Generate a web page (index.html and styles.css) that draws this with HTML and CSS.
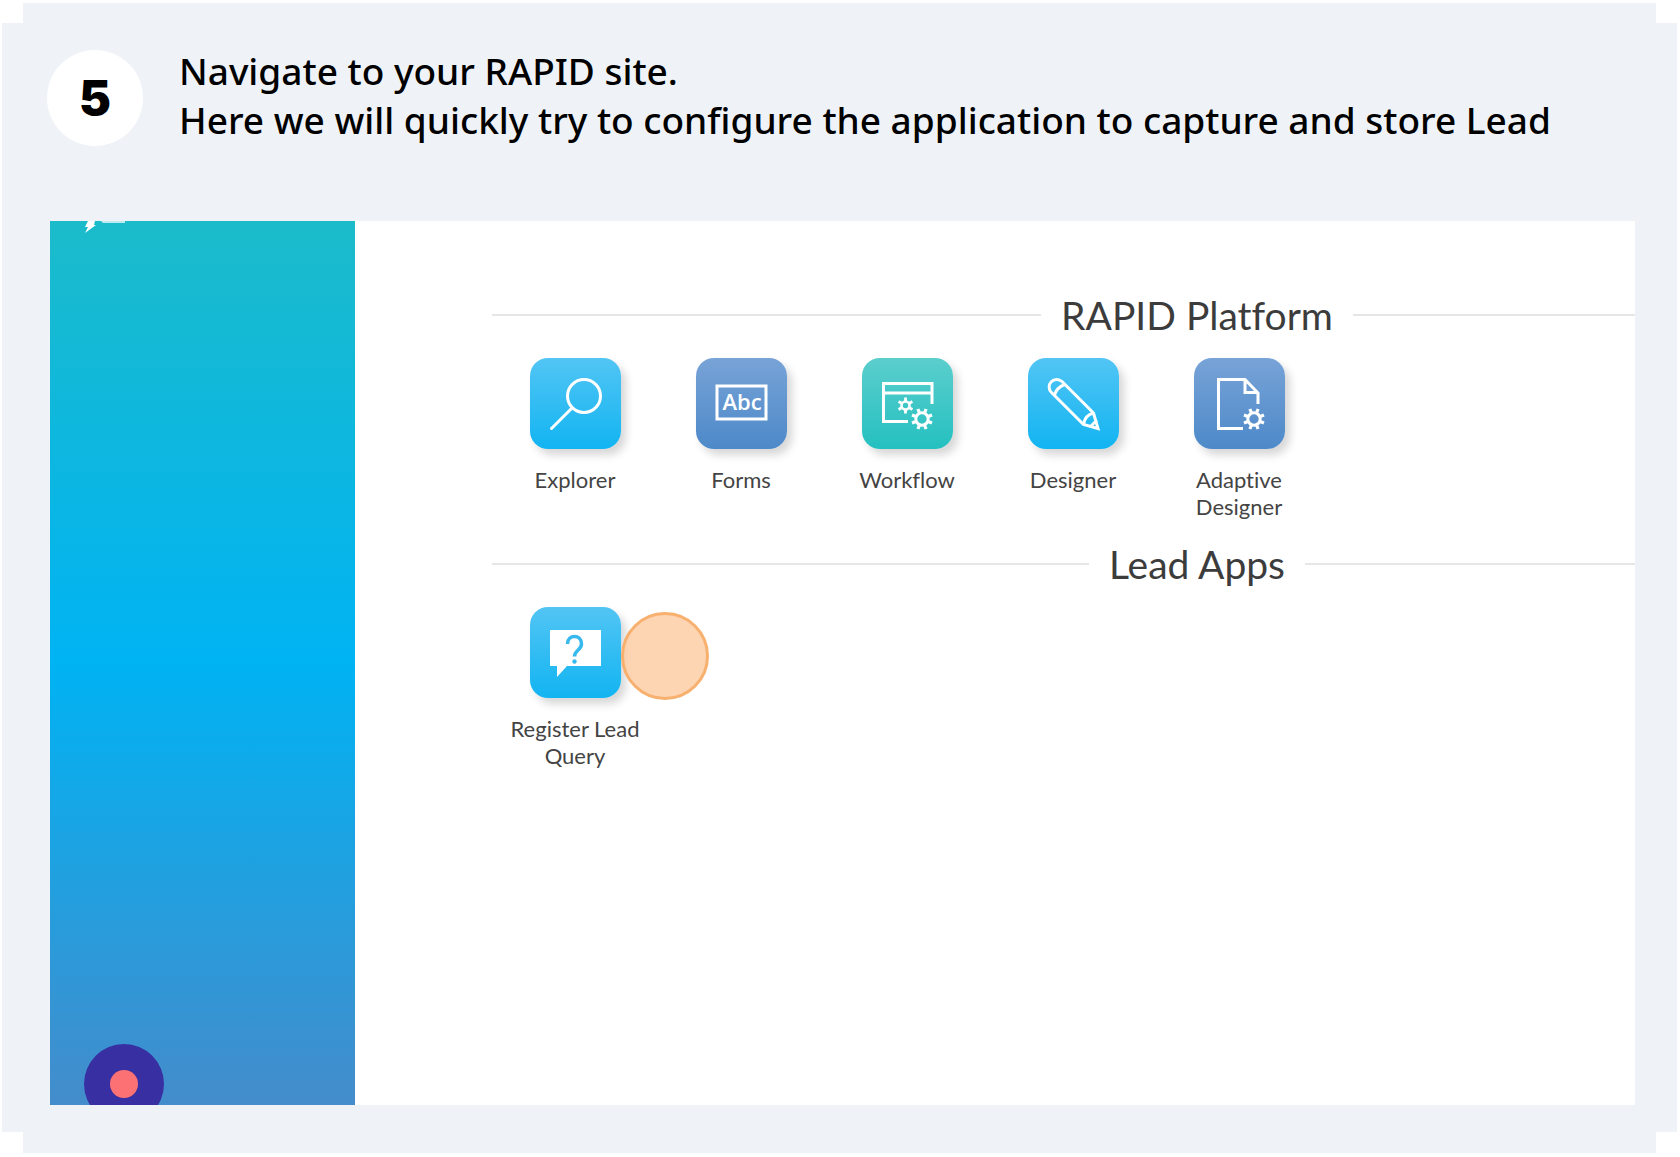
FILE: index.html
```html
<!DOCTYPE html>
<html lang="en">
<head>
<meta charset="utf-8">
<title>Step 5 – RAPID site</title>
<meta name="viewport" content="width=device-width, initial-scale=1">
<link rel="stylesheet" href="styles.css">
</head>
<body>
<svg width="0" height="0" class="defs" aria-hidden="true">
  <symbol id="gear" viewBox="-12 -12 24 24"><g fill="none" stroke="#fff"><circle r="6.200" stroke-width="3"/><path stroke-width="3.200" d="M6 2.500 10 4.100M2.500 6 4.100 10M-2.500 6-4.100 10M-6 2.500-10 4.100M-6-2.500-10-4.100M-2.500-6-4.100-10M2.500-6 4.100-10M6-2.500 10-4.100"/></g></symbol>
</svg>
<main class="step">
  <header class="step-header">
    <span class="step-number">5</span>
    <h1 class="step-text">Navigate to your RAPID site.<br>Here we will quickly try to configure the application to capture and store Lead</h1>
  </header>
  <div class="screen">
    <aside class="sidebar">
      <svg class="logo" width="44" height="12" viewBox="0 0 44 12" aria-hidden="true"><path d="M4 0h7l-1 4h2L1 12l3-6H1z" fill="#fff"/><path d="M17 0h24v2H19z" fill="#fff" opacity=".7"/></svg>
      <button class="record" type="button" aria-label="Record"><span class="record-dot"></span></button>
    </aside>
    <div class="workspace">
      <section class="group">
        <h2 class="group-title">RAPID Platform</h2>
        <div class="apps">
          <a class="app" href="#"><span class="tile sky"><svg viewBox="0 0 91 91" fill="none" stroke="#fff" stroke-width="3" stroke-linecap="round"><circle cx="54" cy="38" r="16.500"/><path d="M42 50 21.500 70.500"/></svg></span>Explorer</a>
          <a class="app" href="#"><span class="tile blue"><svg viewBox="0 0 91 91" fill="none" stroke="#fff" stroke-width="3"><path d="M21 28h49v33H21z"/><text class="abc" x="46" y="52" text-anchor="middle">Abc</text></svg></span>Forms</a>
          <a class="app" href="#"><span class="tile teal"><svg viewBox="0 0 91 91" fill="none" stroke="#fff" stroke-width="3"><path d="M46 63.500H21.500V25.500H70V46M21.500 35H70"/><g transform="translate(43.500 47.500)"><circle r="4" stroke-width="2.500"/><path stroke-width="2.800" d="M0-4v-4M0 4v4M3.500 2 6.900 4M3.500-2 6.900-4M-3.500 2-6.900 4M-3.500-2-6.900-4"/></g><use href="#gear" x="48" y="49" width="24" height="24"/></svg></span>Workflow</a>
          <a class="app" href="#"><span class="tile sky"><svg viewBox="0 0 91 91" fill="none" stroke="#fff" stroke-width="3"><path d="M55.500 66.500 23.500 34.500A7.500 7.500 0 0 1 34 23.500L65.500 55 70 70.500zM26.500 37.500Q28 30 36.500 26.500M55.500 66.500Q57 57 65.500 55M62 69 69 62"/></svg></span>Designer</a>
          <a class="app" href="#"><span class="tile blue"><svg viewBox="0 0 91 91" fill="none" stroke="#fff" stroke-width="3"><path d="M49 70.500H24.500V21.500H51L64 35v11M51 22v12.500h12"/><use href="#gear" x="48" y="49" width="24" height="24"/></svg></span>Adaptive Designer</a>
        </div>
      </section>
      <section class="group">
        <h2 class="group-title">Lead Apps</h2>
        <div class="apps">
          <a class="app" href="#"><span class="tile sky"><svg viewBox="0 0 91 91"><path d="M20 23h51v36H37L27 70V59h-7z" fill="#fff"/><path d="M37.500 37c0-10 14-10 14 0 0 6-7 6-7 12.500" fill="none" stroke="#37b9ee" stroke-width="3.500"/><circle cx="44.500" cy="54.500" r="2.200" fill="#37b9ee"/></svg></span>Register Lead Query<span class="click-marker"></span></a>
        </div>
      </section>
    </div>
  </div>
</main>
</body>
</html>
```
FILE: styles.css
```css
* { box-sizing: border-box; }

body {
  margin: 0;
  background: #fff;
  font-family: Lato, "Liberation Sans", sans-serif;
  font-variant-ligatures: none;
}

.defs { display: none; }

/* The card's corners are notched squares. */
.step {
  margin: 3px 3px 4px 2px;
  padding: 43px 42px 48px 48px;
  background: #eff3f8;
  clip-path: polygon(21px 0, calc(100% - 21px) 0, calc(100% - 21px) 20px, 100% 20px, 100% calc(100% - 21px), calc(100% - 21px) calc(100% - 21px), calc(100% - 21px) 100%, 21px 100%, 21px calc(100% - 21px), 0 calc(100% - 21px), 0 20px, 21px 20px);
}

.step-header {
  display: flex;
  align-items: flex-start;
  gap: 36px;
  min-height: 175px;
  margin-left: -3px;
}

.step-number {
  display: flex;
  flex: none;
  align-items: center;
  justify-content: center;
  width: 96px;
  height: 96px;
  margin-top: 4px;
  border-radius: 50%;
  background: #fff;
  color: #000;
  font: 900 48px/96px Inter, sans-serif;
}

.step-text {
  margin: 0;
  color: #000;
  font: 500 37px/49px "Noto Sans", sans-serif;
}

.screen {
  display: flex;
  min-height: 884px;
  overflow: hidden;
  background: #fff;
}

.sidebar {
  display: flex;
  flex: none;
  flex-direction: column;
  justify-content: space-between;
  align-items: flex-start;
  width: 305px;
  padding: 0 34px;
  background: linear-gradient(#1bbbca, #00b3f3 50%, #448ccb);
}

.logo { display: block; }

.record {
  display: flex;
  align-items: center;
  justify-content: center;
  width: 80px;
  height: 80px;
  margin-bottom: -19px;
  padding: 0;
  border: 0;
  border-radius: 50%;
  background: #372fa2;
}

.record-dot {
  width: 28px;
  height: 28px;
  border-radius: 50%;
  background: #fc7274;
}

/* Wider than the screen: the right part is cut off. */
.workspace {
  flex: none;
  width: 1547px;
  padding: 69px 0 0 137px;
}

.group { min-height: 249px; }

.group-title {
  display: flex;
  align-items: center;
  gap: 20px;
  margin: 0;
  color: #3c3c3c;
  font-size: 39px;
  font-weight: 400;
  line-height: 50px;
}

.group-title::before,
.group-title::after {
  content: "";
  flex: 1;
  height: 2px;
  background: #e6e6e6;
}

.apps {
  display: flex;
  padding-top: 18px;
}

.app {
  position: relative;
  display: flex;
  flex-direction: column;
  align-items: center;
  gap: 17px;
  width: 166px;
  padding: 0 16px;
  color: #444;
  font-size: 22px;
  line-height: 27px;
  text-align: center;
  text-decoration: none;
}

.tile {
  width: 91px;
  height: 91px;
  border-radius: 18px;
  box-shadow: 5px 6px 8px rgba(0, 0, 0, .16);
}

.tile svg { display: block; }
.sky { background: linear-gradient(#52c5f4, #12b4f2); }
.blue { background: linear-gradient(#78a3d7, #4d89c9); }
.teal { background: linear-gradient(#5bcecd, #25c0c0); }

.abc {
  fill: #fff;
  stroke: none;
  font: 600 22px "Open Sans", sans-serif;
}

.click-marker {
  position: absolute;
  top: 5px;
  left: 129px;
  width: 88px;
  height: 88px;
  border: 3px solid #f8b06e;
  border-radius: 50%;
  background: rgba(252, 202, 160, .8);
}
```
